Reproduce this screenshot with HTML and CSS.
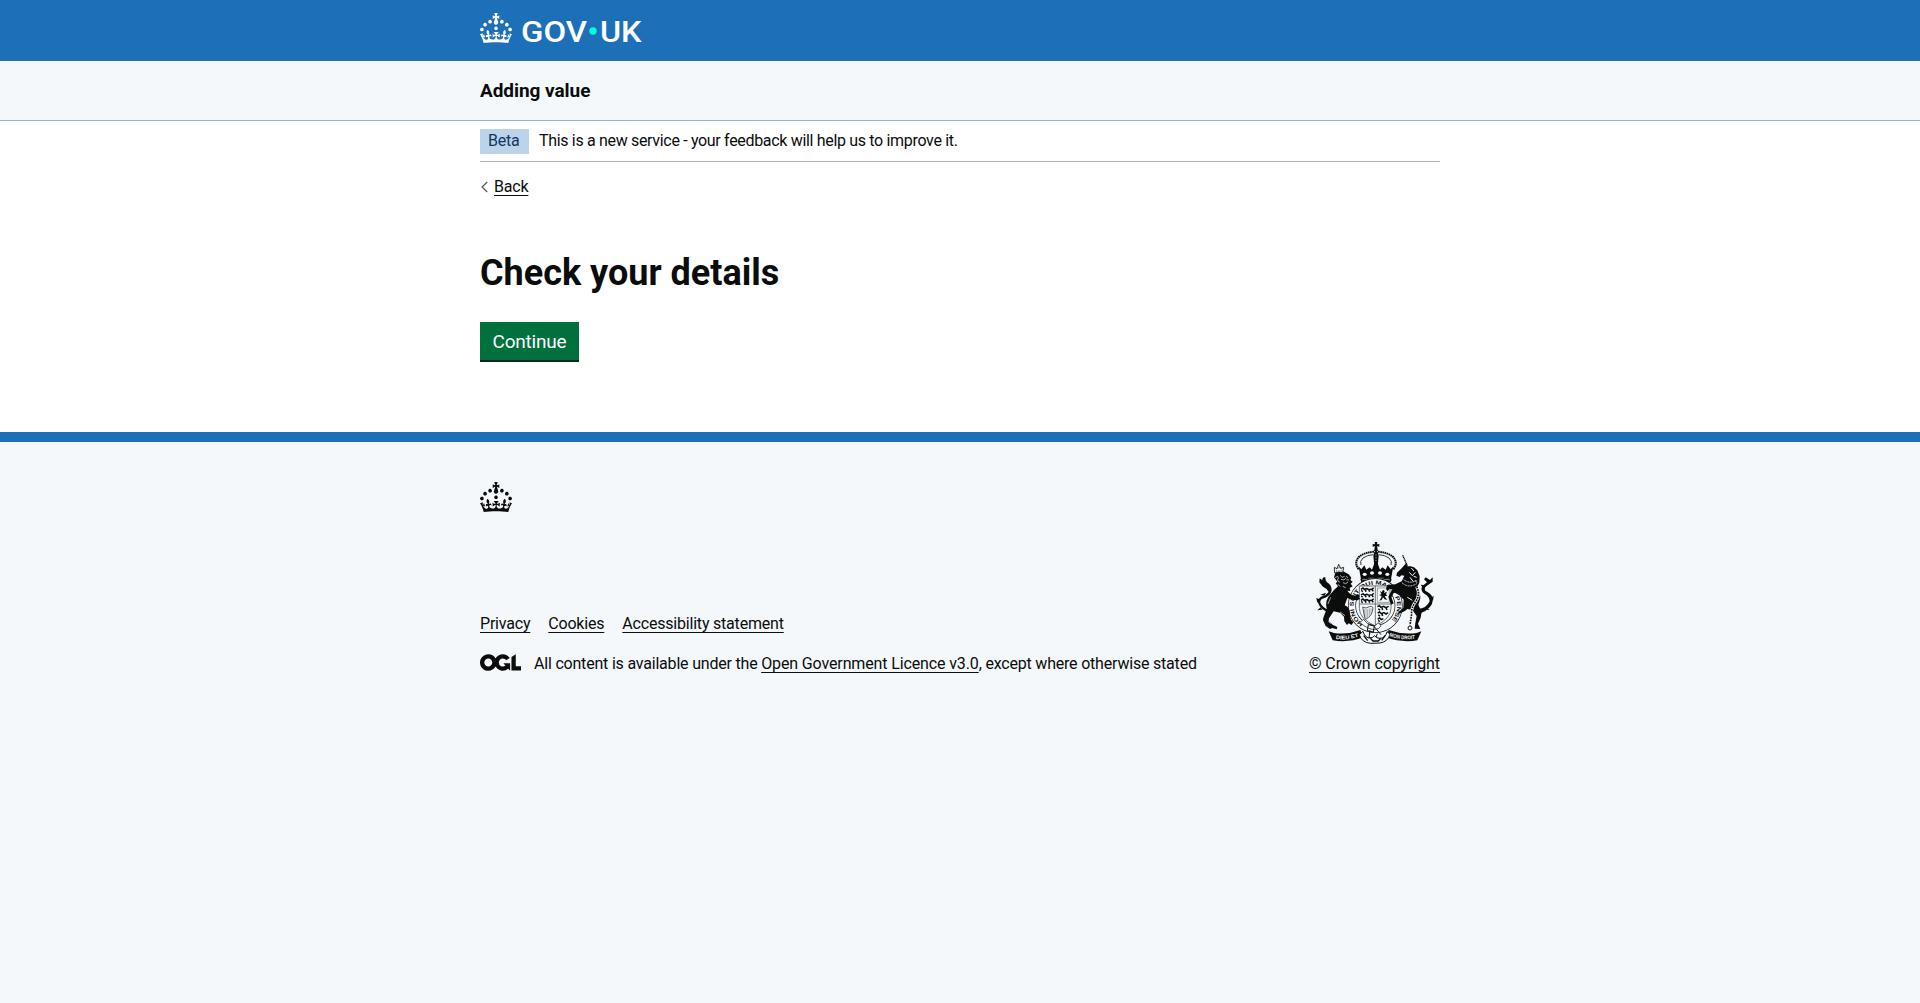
FILE: index.html
```html
<!DOCTYPE html>
<html lang="en">
<head>
<meta charset="utf-8">
<title>Check your details - Adding value - GOV.UK</title>
<link rel="stylesheet" href="styles.css">
</head>
<body>
<svg class="sprite" aria-hidden="true">
  <symbol id="crown" viewBox="0 0 32 30">
    <path fill="currentColor" fill-rule="evenodd" d="M22.6 10.4c-1 .4-2-.1-2.4-1-.4-.9.1-2 1-2.4.9-.4 2 .1 2.4 1s-.1 2-1 2.4m-5.9 6.7c-.9.4-2-.1-2.4-1-.4-.9.1-2 1-2.4.9-.4 2 .1 2.4 1s-.1 2-1 2.4m10.8-3.7c-1 .4-2-.1-2.4-1-.4-.9.1-2 1-2.4.9-.4 2 .1 2.4 1s0 2-1 2.4m3.3 4.8c-1 .4-2-.1-2.4-1-.4-.9.1-2 1-2.4.9-.4 2 .1 2.4 1s-.1 2-1 2.4M17 4.7l2.3 1.2V2.5l-2.3.7-.2-.2.9-3h-3.4l.9 3-.2.2c-.1.1-2.3-.7-2.3-.7v3.4L15 4.7c.1.1.1.2.2.2l-1.3 4c-.1.2-.1.4-.1.6 0 1.1.8 2 1.9 2.2h.7c1-.2 1.9-1.1 1.9-2.1 0-.2 0-.4-.1-.6l-1.3-4c-.1-.2 0-.2.1-.3m-7.6 5.7c.9.4 2-.1 2.4-1 .4-.9-.1-2-1-2.4-.9-.4-2 .1-2.4 1s0 2 1 2.4m-5 3c.9.4 2-.1 2.4-1 .4-.9-.1-2-1-2.4-.9-.4-2 .1-2.4 1s.1 2 1 2.4m-3.2 4.8c.9.4 2-.1 2.4-1 .4-.9-.1-2-1-2.4-.9-.4-2 .1-2.4 1s0 2 1 2.4m14.8 11c4.4 0 8.6.3 12.3.8 1.1-4.5 2.4-7 3.7-8.8l-2.5-.9c.2 1.3.3 1.9 0 2.7-.4-.4-.8-1.1-1.1-2.3l-1.2 4c.7-.5 1.3-.8 2-.9-1.1 2.5-2.6 3.1-3.5 3-1.1-.2-1.7-1.2-1.5-2.1.3-1.2 1.5-1.5 2.1-.1 1.1-2.3-.8-3-2-2.3 1.9-1.9 2.1-3.5.6-5.6-2.1 1.6-2.1 3.2-1.2 5.5-1.2-1.4-3.2-.6-2.5 1.6.9-1.4 2.1-.5 1.9.8-.2 1.1-1.7 2.1-3.5 1.9-2.7-.2-2.9-2.1-2.9-3.6.7-.1 1.9.5 2.9 1.9l.4-4.3c-1.1 1.1-2.1 1.4-3.2 1.4.4-1.2 2.1-3 2.1-3h-5.4s1.7 1.9 2.1 3c-1.1 0-2.1-.2-3.2-1.4l.4 4.3c1-1.4 2.2-2 2.9-1.9-.1 1.5-.2 3.4-2.9 3.6-1.9.2-3.4-.8-3.5-1.9-.2-1.3 1-2.2 1.9-.8.7-2.3-1.2-3-2.5-1.6.9-2.2.9-3.9-1.2-5.5-1.5 2-1.3 3.7.6 5.6-1.2-.7-3.1 0-2 2.3.6-1.4 1.8-1.1 2.1.1.2.9-.3 1.9-1.5 2.1-.9.2-2.4-.5-3.5-3 .6 0 1.2.3 2 .9l-1.2-4c-.3 1.1-.7 1.9-1.1 2.3-.3-.8-.2-1.4 0-2.7l-2.9.9C1.3 23 2.6 25.5 3.7 30c3.7-.5 7.9-.8 12.3-.8"/>
  </symbol>
</svg>

<header class="header">
  <div class="container">
    <a class="logo" href="#" aria-label="GOV.UK">
      <svg class="logo-svg" width="162" height="30" viewBox="0 0 162 30">
        <use href="#crown" width="32" height="30"/>
        <text x="41" y="28.5" textLength="66" lengthAdjust="spacingAndGlyphs">GOV</text>
        <circle cx="113" cy="18" r="3.7" fill="#00ffe0"/>
        <text x="120" y="28.5" textLength="41.5" lengthAdjust="spacingAndGlyphs">UK</text>
      </svg>
    </a>
  </div>
</header>

<section class="service">
  <div class="container"><a class="service-name" href="#">Adding value</a></div>
</section>

<div class="container">
  <div class="phase">
    <strong class="tag">Beta</strong>
    <span class="phase-text">This is a new service - your feedback will help us to improve it.</span>
  </div>
  <a class="back" href="#">
    <svg width="9" height="12" viewBox="0 0 9 12"><path d="M7.200 1 2 6l5.200 5" fill="none" stroke="#505a5f" stroke-width="1.200"/></svg>
    <span class="link">Back</span>
  </a>
  <main class="main">
    <h1>Check your details</h1>
    <button class="button" type="button">Continue</button>
  </main>
</div>

<footer class="footer">
  <div class="container">
    <svg class="footer-crown" width="32" height="30"><use href="#crown"/></svg>
    <div class="meta">
      <div>
        <ul class="links">
          <li><a class="link" href="#">Privacy</a></li>
          <li><a class="link" href="#">Cookies</a></li>
          <li><a class="link" href="#">Accessibility statement</a></li>
        </ul>
        <div class="licence">
          <svg width="41" height="17" viewBox="0 0 483.2 195.7"><path fill="currentColor" d="M421.5 142.8V.1l-50.7 32.3v161.1h112.4v-50.7zm-122.3-9.6A47.12 47.12 0 0 1 221 97.8c0-26 21.1-47.1 47.1-47.1 16.7 0 31.4 8.7 39.7 21.8l42.7-27.2A97.63 97.63 0 0 0 268.1 0c-36.5 0-68.3 20.1-85.1 49.7A98 98 0 0 0 97.8 0C43.9 0 0 43.9 0 97.8s43.9 97.8 97.8 97.8c36.5 0 68.3-20.1 85.1-49.7a97.76 97.76 0 0 0 149.6 25.4l19.4 22.2h3v-87.8h-80l24.3 27.5zM97.8 145c-26 0-47.1-21.1-47.1-47.1s21.1-47.1 47.1-47.1 47.1 21.1 47.1 47.1S123.8 145 97.8 145"/></svg>
          <p>All content is available under the <a class="link ogl-link" href="#">Open Government Licence v3.0</a>, except where otherwise stated</p>
        </div>
      </div>
      <a class="copyright" href="#">
        <svg class="crest" width="125" height="102" viewBox="36 36 375 306" aria-hidden="true">
          <!-- crown -->
          <g fill="currentColor">
            <path d="M224 36h8l-1 7 7-1v8l-7-1 2 9h-10l2-9-7 1v-8l7 1z"/>
            <circle cx="228" cy="61" r="5.500"/>
            <path d="M223 66h10l3 12-3 30h-10l-3-30z"/>
            <path d="M176 109l8 9 9-12 6 13 10-7 7 7 7-19h10l7 19 7-7 10 7 6-13 9 12 8-9-7 39q-45-12-90 0z"/>
            <path d="M181 147q47-12 94 0l-3 10q-44-10-88 0z"/>
          </g>
          <g fill="none" stroke="currentColor">
            <path d="M176 118q-16-22 3-39 16-12 44-14M280 118q16-22-3-39-16-12-44-14" stroke-width="6" stroke-dasharray="5 1.500"/>
            <path d="M183 105q-5-11 6-21 12-9 31-10M273 105q5-11-6-21-12-9-31-10" stroke-width="2.500"/>
          </g>
          <g fill="#f4f8fb">
            <circle cx="228" cy="75" r="1.500"/><circle cx="228" cy="83" r="1.500"/><circle cx="228" cy="91" r="1.500"/>
            <ellipse cx="194" cy="133" rx="6" ry="5"/><ellipse cx="216" cy="129" rx="6" ry="5"/><ellipse cx="240" cy="129" rx="6" ry="5"/><ellipse cx="262" cy="133" rx="6" ry="5"/>
            <path d="M186 149q42-9 84 0v2q-42-9-84 0z"/>
          </g>
          <!-- garter -->
          <ellipse cx="226" cy="227" rx="70" ry="70" fill="none" stroke="currentColor" stroke-width="24"/>
          <ellipse cx="226" cy="227" rx="70" ry="70" fill="none" stroke="#f4f8fb" stroke-width="20"/>
          <path id="garter" d="M190 281A65 64 0 1 1 262 281" fill="none"/>
          <text class="motto" font-size="17"><textPath href="#garter" textLength="312" lengthAdjust="spacingAndGlyphs">HONI SOIT QUI MAL Y PENSE</textPath></text>
          <!-- shield -->
          <path d="M178 168h95v67q0 31-47 53-48-22-48-53z" fill="#f4f8fb" stroke="#6f7477" stroke-width="3"/>
          <path d="M226 168v119M178 222h95" stroke="#6f7477" stroke-width="3"/>
          <g fill="none" stroke="currentColor" stroke-width="4.500">
            <path d="M183 178l6-4 4 4 8-2 6 3 10-2 4-4M184 181l4 4M196 179l2 6M207 180l2 5M216 179l4 5"/>
            <path d="M183 195l6-4 4 4 8-2 6 3 10-2 4-4M184 198l4 4M196 196l2 6M207 197l2 5M216 196l4 5"/>
            <path d="M183 211l6-4 4 4 8-2 6 3 10-2 4-4M184 214l4 4M196 212l2 6M207 213l2 5M216 212l4 5"/>
            <path d="M232 230l6-3 5 5 8-3 6 4 9-4M235 236l5 5M246 234l2 6M258 234l3 6M233 249l6-3 5 5 8-3 6 4 6-4M235 254l5 5M246 252l2 6M233 267l6-3 5 5 6-3M235 271l4 4"/>
          </g>
          <path d="M232 174h36v43h-36z" fill="none" stroke="#6f7477" stroke-width="2"/>
          <path d="M240 182l5 5 4-8 5 4-2 6 9-4-3 8 4 4-8 2 4 6 4 5-8-2-5-6-4 8-7 2 5-8 2-6-8-3 7-2z" fill="currentColor"/>
          <g fill="none" stroke="#55595b">
            <path d="M188 231q10 7 20-1 6-3 11 3-1 25-23 36-4-16-8-38" stroke-width="3"/>
            <path d="M193 237v22M198 238v26M203 237v26M208 235v22M213 235v16" stroke-width="1.500"/>
          </g>
          <!-- buckle -->
          <path d="M180 278q24 20 43 21 17-2 20-13l-9-8q-6 11-14 9-20-4-30-19z" fill="#f4f8fb" stroke="currentColor" stroke-width="2"/>
          <path d="M205 284l18 4-3 18-18-4zM223 290l20 24M210 301l-3 22 19 5 6-17" fill="none" stroke="currentColor" stroke-width="3"/>
          <!-- lion -->
          <g fill="currentColor">
            <path d="M102 142l4-14 22-5 18 10 8 10-3 7 7 5-6 6 6 8-9 5 2 9-9-1q10 14 24 15l6-5 8 6-4 3 5 5-9 5-18-2-12-5-8 22q17 7 15 24l4 19 7 8-5 8-9-5-5 5-8-11-1-14-12-12-19-4-14 21-1 8 12 11 14 7-2 7-13-4-7 3-13-9-8-17 1-8 10-26q-6-28 12-45 9-12 22-23l-7-9 5-5z"/>
            <path d="M94 249Q61 243 53 215q4-16 23-19l10-10q-5-11-17-16l-11-13 1-12 8 6q0-12 9-9-1 10 5 15 14 8 14 24-3 16-19 22-17 3-15 15 7 16 27 22z"/>
            <path d="M52 218l-3-14 10 4zM62 232l-10 9 15-2zM74 197l-13-3 17-6z"/>
          </g>
          <path d="M104 129l-1-17 8 4 5-13 6 12 9-3-3 16q-12-4-24 1z" fill="#f4f8fb" stroke="currentColor" stroke-width="2.500"/>
          <path d="M109 117q9-7 16 0M108 123h17" fill="none" stroke="currentColor" stroke-width="2" stroke-dasharray="3 2"/>
          <path d="M105 143l8-4 3 6-5 4 7 6M121 136l5 6 8-3M123 148l9 2 6-6M129 158l8 3 7-5M113 163l8 6M138 139l6 4M128 169l9 4M115 154l4 3M139 149l8 1M84 222l8-20M120 246l15 11M85 274l7 7" fill="none" stroke="#f4f8fb" stroke-width="2"/>
          <!-- unicorn -->
          <path d="M308 76l14 31" stroke="currentColor" stroke-width="4" stroke-dasharray="4 1" fill="none"/>
          <g fill="currentColor">
            <path d="M318 100l4 9 10 0 10 3 10 9 7 18-1 19-8 15q12 16 11 32l-6 20 10 20-3 18-8 18 7 16-17-1 2-17 4-21-13-18-15-3q-7 8-21 13l-9 2 4-6 14-13 1-24-13-13-16-9-8 15 7 18-8 4-8-24 12-22-9-1-5 7-5-7 3-12 25-2 19-9 8-17-9-1-5 5-10-4 2-9 14-13z"/>
            <path d="M354 237q25-1 35-23-1-15-15-22-13-8-8-23l15-12-9-9 5-6 13 8 8-8v13l-13 9q-15 8-9 18 20 9 23 25-1 29-38 43z"/>
            <path d="M392 205l9-8-2 15zM378 231l11 8-15 1zM371 176l-9-12 14 2z"/>
          </g>
          <path d="M328 127l9 10 9-10M334 114l8 9M341 139l9 3M330 142l9 12M345 151l6 7M322 202l15 9" fill="none" stroke="#f4f8fb" stroke-width="3"/>
          <path d="M306 158q20 18 44 3M311 149q18 14 39 2" fill="none" stroke="#f4f8fb" stroke-width="3" stroke-dasharray="3 2"/>
          <path d="M350 170q12 24-3 45-14 18-12 36l-5 35" fill="none" stroke="#f4f8fb" stroke-width="9"/>
          <path d="M350 170q12 24-3 45-14 18-12 36l-5 35" fill="none" stroke="currentColor" stroke-width="5" stroke-dasharray="5 3"/>
          <circle cx="330" cy="294" r="6" fill="none" stroke="currentColor" stroke-width="3"/>
          <!-- motto scroll -->
          <path d="M86 304l16 5q40 6 79-9l8 22q-42 17-91 9zM364 304l-14 5q-42 6-84-9l-9 22q49 17 95 9z" fill="currentColor"/>
          <path d="M178 314q7 24 34 26l28-1q25-4 30-27l-9-7q-4 19-21 20-12 0-16-8-6 8-17 7-14-3-18-20z" fill="#f4f8fb" stroke="currentColor" stroke-width="3"/>
          <path d="M211 325l8 8h16l7-8M191 317l12 15M256 316l-11 15" fill="none" stroke="currentColor" stroke-width="4"/>
          <path id="scroll-left" d="M107 327q35 5 71-8" fill="none"/>
          <path id="scroll-right" d="M268 319q38 13 80 7" fill="none"/>
          <text class="scroll" font-size="16"><textPath href="#scroll-left" textLength="70" lengthAdjust="spacingAndGlyphs">DIEU ET</textPath></text>
          <text class="scroll" font-size="16"><textPath href="#scroll-right" textLength="78" lengthAdjust="spacingAndGlyphs">MON DROIT</textPath></text>
        </svg>
        <span class="link">© Crown copyright</span>
      </a>
    </div>
  </div>
</footer>
</body>
</html>
```
FILE: styles.css
```css
* { box-sizing: border-box; }
html { background: #f4f8fb; }
body {
  margin: 0;
  background: #fff;
  color: #0b0c0c;
  font: 16px/20px Roboto, "Liberation Sans", sans-serif;
  letter-spacing: -0.2px;
}
a { color: inherit; text-decoration: none; }
svg { display: block; flex: none; }
.sprite { display: none; }
.container { width: 960px; margin: 0 auto; }
.link {
  text-decoration: underline;
  text-decoration-thickness: 1px;
  text-underline-offset: 3px;
  text-decoration-skip-ink: none;
}

.header { height: 61px; background: #1d70b8; color: #fff; padding-top: 13px; }
.logo { display: block; }
.logo-svg { overflow: visible; }
.logo-svg text { font: 500 29px Roboto, sans-serif; fill: #fff; letter-spacing: 0; }

.service { height: 60px; background: #f4f8fb; border-bottom: 1px solid #8eb8dc; padding-top: 17px; }
.service-name { font-size: 19px; line-height: 25px; font-weight: 700; letter-spacing: -0.05px; }

.phase { display: flex; align-items: center; gap: 10px; height: 41px; padding-bottom: 1px; border-bottom: 1px solid #b1b4b6; }
.tag { width: 49px; height: 25px; margin-top: 1px; padding: 2px 8px 3px; background: #bbd4ea; color: #0f385c; font-weight: 400; }
.phase-text { letter-spacing: -0.325px; padding-top: 1px; }

.back { display: flex; align-items: center; gap: 5px; margin-top: 15px; height: 20px; width: max-content; }

.main { padding: 56px 0 72px; }
h1 { margin: 0 0 29px; font-size: 36px; line-height: 40px; font-weight: 700; letter-spacing: 0; }
.button {
  display: block; width: 99px; height: 38px; padding: 0; border: 0;
  background: #00703c; color: #fff; box-shadow: 0 2px 0 #002d18;
  font: 19px/39px Roboto, sans-serif; letter-spacing: -0.2px;
}

.footer { border-top: 10px solid #1d70b8; background: #f4f8fb; padding-top: 40px; }
.footer-crown { margin-bottom: 30px; }
.meta { display: flex; justify-content: space-between; align-items: flex-end; }
.links { display: flex; gap: 18px; list-style: none; margin: 0 0 20px; padding: 0; }
.licence { display: flex; align-items: center; gap: 13px; }
.licence svg { margin-top: -3px; }
.licence p { margin: 0; }
.ogl-link { letter-spacing: -0.13px; }
.copyright { width: 131px; letter-spacing: -0.09px; white-space: nowrap; }
.crest { margin: 0 auto 10px; }
.motto { font-family: "Liberation Sans", sans-serif; font-weight: 700; fill: #0b0c0c; letter-spacing: 0; }
.scroll { font-family: "Liberation Sans", sans-serif; font-weight: 700; fill: #f4f8fb; letter-spacing: 0; }
```
